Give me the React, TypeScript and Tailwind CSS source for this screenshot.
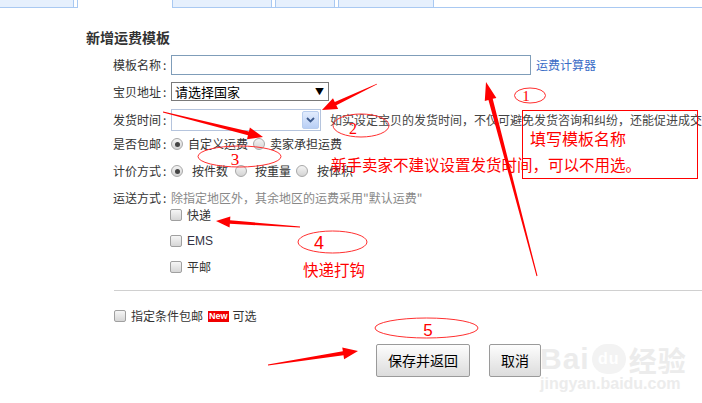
import React from "react";

const font = "font-['Noto_Sans_CJK_SC','Noto_Sans',sans-serif]";

function arrowPoints(x1: number, y1: number, x2: number, y2: number, headLen = 16, headW = 6, neck = 2, tail = 0.4) {
  const dx = x2 - x1;
  const dy = y2 - y1;
  const L = Math.hypot(dx, dy);
  const ux = dx / L;
  const uy = dy / L;
  const px = -uy;
  const py = ux;
  const bx = x2 - ux * headLen;
  const by = y2 - uy * headLen;
  const pts = [
    [x1 + px * tail, y1 + py * tail],
    [bx + px * neck, by + py * neck],
    [bx + px * headW, by + py * headW],
    [x2, y2],
    [bx - px * headW, by - py * headW],
    [bx - px * neck, by - py * neck],
    [x1 - px * tail, y1 - py * tail],
  ];
  return pts.map((p) => p.join(",")).join(" ");
}

function Radio({ checked }: { checked?: boolean }) {
  return (
    <span className="w-[12px] h-[12px] rounded-full border border-[#a8a8a8] bg-gradient-to-b from-[#f4f4f4] to-[#d4d4d4] flex items-center justify-center shrink-0">
      {checked && <span className="w-[5px] h-[5px] rounded-full bg-[#444]" />}
    </span>
  );
}

function Check() {
  return <span className="w-[12px] h-[12px] rounded-[2px] border border-[#a0a0a0] bg-gradient-to-b from-[#f6f6f6] to-[#d6d6d6] shrink-0" />;
}

function Label({ text }: { text: string }) {
  return (
    <div className="w-[85px] flex justify-end pr-[2px] text-[12px] text-[#333] shrink-0">
      <span>{text}</span>
      <span className="w-[8px] pl-[2px]">:</span>
    </div>
  );
}

export default function App() {
  return (
    <div className={`relative w-[702px] h-[403px] bg-white overflow-hidden ${font}`}>
      {/* tabs */}
      <div className="flex h-[8px]">
        <div className="w-[74px] bg-[#e6f0fd] border-r border-b border-[#a9c9f2]" />
        <div className="w-[3px] border-b border-[#a9c9f2]" />
        <div className="w-[96px] bg-white border-l border-r border-[#a9c9f2]" />
        <div className="flex-1 flex border-b border-[#a9c9f2]">
          <div className="w-[99px] bg-[#e6f0fd] border-r border-[#a9c9f2]" />
          <div className="w-[3px]" />
          <div className="w-[60px] bg-[#e6f0fd] border-l border-r border-[#a9c9f2]" />
          <div className="w-[3px]" />
          <div className="w-[96px] bg-[#e6f0fd] border-l border-r border-[#a9c9f2]" />
        </div>
      </div>

      <div className="pl-[86px]">
        <div className="mt-[19px] h-[20px] flex items-center text-[14px] font-bold text-[#333]">新增运费模板</div>

        <div className="mt-[8px] flex items-center h-[20px]">
          <Label text="模板名称" />
          <div className="w-[360px] h-[20px] border border-[#7f9db9] bg-white" />
          <a className="ml-[5px] text-[12px] text-[#3a6cc6]">运费计算器</a>
        </div>

        <div className="mt-[7px] flex items-center h-[19px]">
          <Label text="宝贝地址" />
          <div className="w-[158px] h-[19px] border border-[#7a7a7a] flex items-center justify-between px-[3px] text-[13px] text-black">
            <span>请选择国家</span>
            <span className="text-[9px] mr-[1px]">▼</span>
          </div>
        </div>

        <div className="mt-[8px] flex items-center h-[22px]">
          <Label text="发货时间" />
          <div className="w-[150px] h-[22px] border border-[#b5c4dd] flex justify-end p-[1px]">
            <div className="w-[17px] h-full rounded-[2px] border border-[#b8cdee] bg-gradient-to-b from-[#e2ecfd] to-[#b9cff5] flex items-center justify-center">
              <svg width="9" height="6" viewBox="0 0 9 6">
                <path d="M1 1 L4.5 4.5 L8 1" fill="none" stroke="#3d5a8c" strokeWidth="1.8" />
              </svg>
            </div>
          </div>
          <span className="ml-[9px] text-[12px] text-[#444] whitespace-nowrap">如实设定宝贝的发货时间，不仅可避免发货咨询和纠纷，还能促进成交</span>
        </div>

        <div className="mt-[3px] flex items-center h-[20px] text-[12px] text-[#333]">
          <Label text="是否包邮" />
          <Radio checked />
          <span className="ml-[5px]">自定义运费</span>
          <span className="ml-[5px]"><Radio /></span>
          <span className="ml-[5px]">卖家承担运费</span>
        </div>

        <div className="mt-[7px] flex items-center h-[20px] text-[12px] text-[#333]">
          <Label text="计价方式" />
          <Radio checked />
          <span className="ml-[9px]">按件数</span>
          <span className="ml-[7px]"><Radio /></span>
          <span className="ml-[8px]">按重量</span>
          <span className="ml-[5px]"><Radio /></span>
          <span className="ml-[9px]">按体积</span>
        </div>

        <div className="mt-[9px] flex items-center h-[16px] text-[12px]">
          <Label text="运送方式" />
          <span className="text-[#888]">除指定地区外，其余地区的运费采用"默认运费"</span>
        </div>

        <div className="pl-[84px] text-[12px] text-[#333]">
          <div className="flex items-center h-[18px] gap-[5px]"><Check /><span>快递</span></div>
          <div className="mt-[8px] flex items-center h-[18px] gap-[5px]"><Check /><span className="font-['Liberation_Sans',sans-serif] text-[#334]">EMS</span></div>
          <div className="mt-[8px] flex items-center h-[18px] gap-[5px]"><Check /><span>平邮</span></div>
        </div>
      </div>

      <div className="ml-[114px] mt-[14px] border-t border-[#d0d0d0]" />

      <div className="ml-[114px] mt-[15px] h-[20px] flex items-center text-[12px] text-[#333]">
        <Check />
        <span className="ml-[5px]">指定条件包邮</span>
        <span className="ml-[5px] px-[1px] h-[11px] leading-[11px] bg-[#f00000] text-white text-[9px] font-bold font-['Liberation_Sans',sans-serif]">New</span>
        <span className="ml-[4px]">可选</span>
      </div>

      <div className="ml-[376px] mt-[18px] flex gap-[19px]">
        <button className="w-[94px] h-[33px] border border-[#9a9a9a] rounded-[2px] bg-gradient-to-b from-[#fdfdfd] to-[#dcdcdc] text-[14px] text-black">保存并返回</button>
        <button className="w-[52px] h-[33px] border border-[#9a9a9a] rounded-[2px] bg-gradient-to-b from-[#fdfdfd] to-[#dcdcdc] text-[14px] text-black">取消</button>
      </div>

      {/* watermark */}
      <div className="absolute left-[540px] top-[338px] text-[#ececec] pointer-events-none">
        <div className="flex items-end h-[36px] font-['Liberation_Sans',sans-serif] font-bold text-[30px] leading-none tracking-[1px]">
          <span>Bai</span>
          <span className="ml-[2px] w-[34px] h-[30px] rounded-full bg-[#f3f3f3] text-white text-[16px] flex items-center justify-center">du</span>
          <span className={`ml-[3px] text-[28px] ${font}`}>经验</span>
        </div>
        <div className="mt-[2px] text-[16px] font-['Liberation_Sans',sans-serif] font-bold leading-none">jingyan.baidu.com</div>
      </div>

      {/* annotations */}
      <svg className="absolute inset-0 pointer-events-none" width="702" height="403" viewBox="0 0 702 403">
        <g fill="#ff0000">
          <polygon points={arrowPoints(537, 276, 486, 82, 18, 6, 2.2, 0.5)} />
          <polygon points={arrowPoints(377, 84, 322, 110, 15, 6, 1.8, 0.3)} />
          <polygon points={arrowPoints(163, 112, 263, 137, 15, 6, 2, 0.4)} />
          <polygon points={arrowPoints(300, 227, 216, 221, 14, 5.5, 1.8, 0.4)} />
          <polygon points={arrowPoints(268, 365, 358, 351, 15, 6, 2, 0.4)} />
        </g>
        <g fill="none" stroke="#ff3030" strokeWidth="1">
          <ellipse cx="530" cy="95.5" rx="15.5" ry="7.5" />
          <ellipse cx="361" cy="125.5" rx="28" ry="11.5" />
          <ellipse cx="239.5" cy="156.5" rx="41.5" ry="10.5" />
          <ellipse cx="332.5" cy="242" rx="34.5" ry="11" />
          <ellipse cx="426.5" cy="328" rx="51.5" ry="10" />
        </g>
        <rect x="522.5" y="110.5" width="175" height="68" fill="none" stroke="#ff0000" strokeWidth="1" />
        <g fill="#ff0000" fontFamily="'Liberation Serif', serif">
          <text x="526" y="101" fontSize="15" textAnchor="middle">1</text>
          <text x="353" y="134" fontSize="16" textAnchor="middle">2</text>
          <text x="235" y="165" fontSize="17" textAnchor="middle">3</text>
        </g>
        <g fill="#ff0000" fontFamily="'Liberation Sans', sans-serif">
          <text x="319" y="249" fontSize="18" textAnchor="middle">4</text>
          <text x="428" y="336" fontSize="17" textAnchor="middle">5</text>
        </g>
      </svg>

      <div className="absolute left-[530px] top-[130px] text-[16px] leading-none text-[#ff0000] whitespace-nowrap">填写模板名称</div>
      <div className="absolute left-[331px] top-[157px] text-[15.5px] leading-none text-[#ff0000] whitespace-nowrap">新手卖家不建议设置发货时间，可以不用选。</div>
      <div className="absolute left-[303px] top-[262px] text-[15.5px] leading-none text-[#ff0000] whitespace-nowrap">快递打钩</div>
    </div>
  );
}
